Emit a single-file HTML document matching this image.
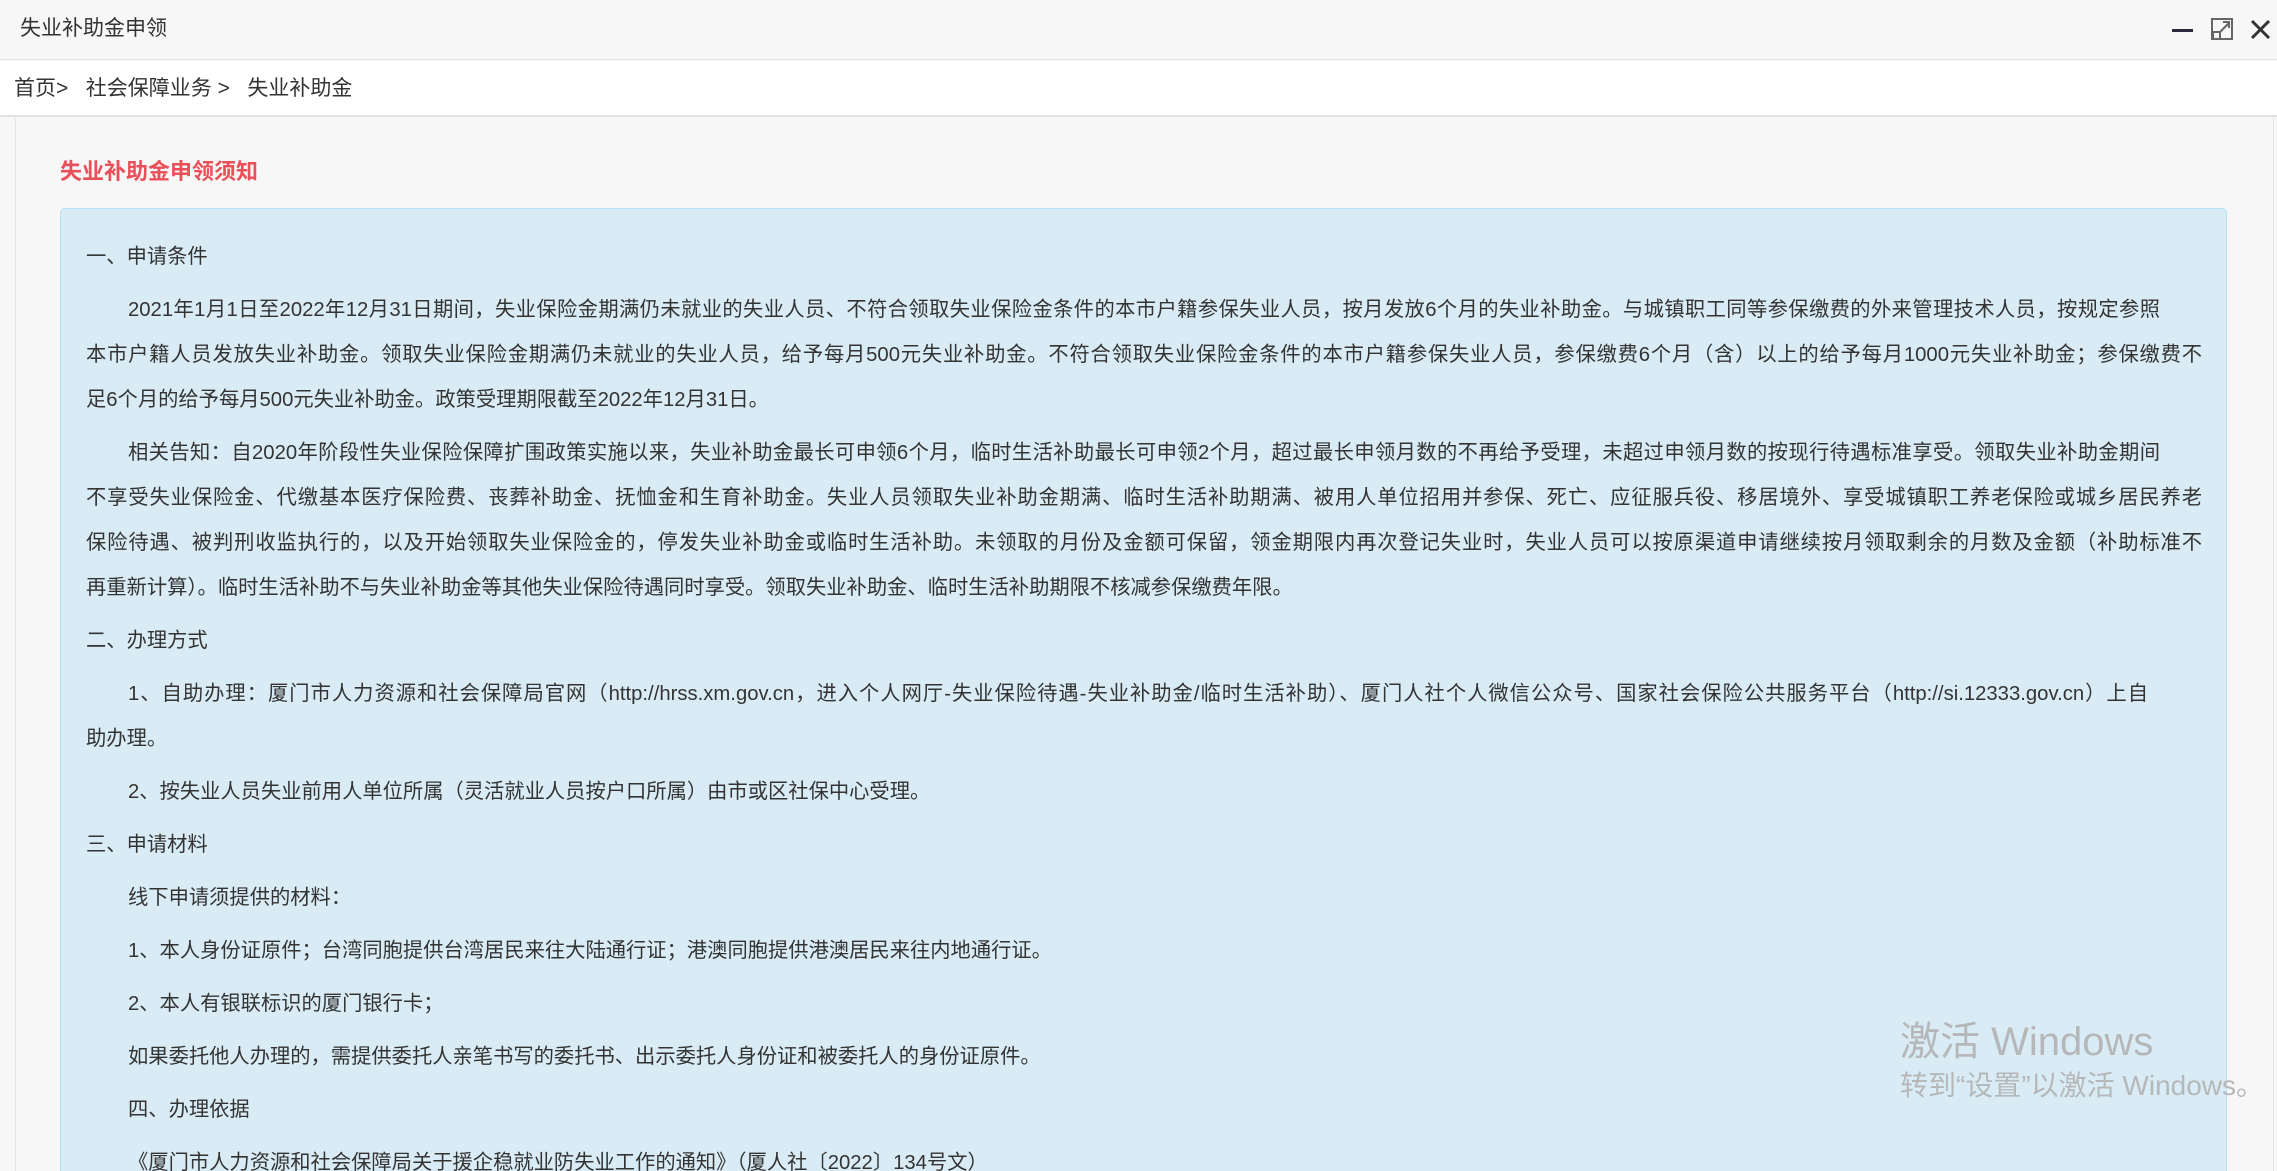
<!DOCTYPE html>
<html><head><meta charset="utf-8"><style>
*{margin:0;padding:0;box-sizing:border-box}
html,body{width:2277px;height:1171px;overflow:hidden}
body{background:#f7f7f7;font-family:"Liberation Sans","Noto Sans CJK SC",sans-serif;color:#333;position:relative}
.tb{position:absolute;left:0;top:0;width:2277px;height:60px;background:#f7f7f7;border-bottom:1px solid #e6e6e6}
.tb .t{position:absolute;left:20px;top:14px;font-size:21px;line-height:30px;color:#333}
.bc{position:absolute;left:0;top:61px;width:2277px;height:56px;background:#fff;border-bottom:2px solid #e2e2e2;font-size:21px;line-height:56px;padding-left:14px;color:#333}
.ct{position:absolute;left:15px;top:118px;width:2259px;height:1053px;border-left:1px solid #e4e4e4;border-right:1px solid #e4e4e4;background:#f7f7f7}
.h{position:absolute;left:60px;top:157px;font-size:22px;font-weight:bold;color:#e9505a;line-height:30px}
.box{position:absolute;left:60px;top:208px;width:2167px;height:1000px;background:#d9ecf5;border:1px solid #b4e2f2;border-radius:5px;padding:26px 0 0 25px}
.box div{font-size:20.3px;line-height:45px;white-space:nowrap}
.box .f{width:2074px;text-align:justify;text-align-last:justify}
.i{padding-left:42px}
.g{margin-top:8px}
.wm{position:absolute;left:1900px;top:1016px;color:#b5b7b9;font-family:"Liberation Sans","Noto Sans CJK SC",sans-serif;white-space:nowrap}
</style></head><body>
<div class="tb"><span class="t">失业补助金申领</span>
<svg style="position:absolute;left:2170px;top:18px" width="104" height="24" viewBox="0 0 104 24">
<rect x="2" y="11" width="21" height="3" fill="#2a2a3a"/>
<rect x="42" y="1" width="20" height="20" fill="none" stroke="#666" stroke-width="2"/>
<rect x="43" y="14" width="7" height="7" fill="#f7f7f7" stroke="#666" stroke-width="2"/>
<path d="M50 14 L59 5 M53 4 H59 V10" fill="none" stroke="#666" stroke-width="2"/>
<path d="M82 3 L99 20 M99 3 L82 20" stroke="#333" stroke-width="3"/>
</svg></div>
<div class="bc">首页&gt;&nbsp;&nbsp; 社会保障业务 &gt;&nbsp;&nbsp; 失业补助金</div>
<div class="ct"></div>
<div class="h">失业补助金申领须知</div>
<div class="box">
<div>一、申请条件</div>
<div class="g i f">2021年1月1日至2022年12月31日期间，失业保险金期满仍未就业的失业人员、不符合领取失业保险金条件的本市户籍参保失业人员，按月发放6个月的失业补助金。与城镇职工同等参保缴费的外来管理技术人员，按规定参照</div>
<div class="f" style="width:2116px">本市户籍人员发放失业补助金。领取失业保险金期满仍未就业的失业人员，给予每月500元失业补助金。不符合领取失业保险金条件的本市户籍参保失业人员，参保缴费6个月（含）以上的给予每月1000元失业补助金；参保缴费不</div>
<div>足6个月的给予每月500元失业补助金。政策受理期限截至2022年12月31日。</div>
<div class="g i f">相关告知：自2020年阶段性失业保险保障扩围政策实施以来，失业补助金最长可申领6个月，临时生活补助最长可申领2个月，超过最长申领月数的不再给予受理，未超过申领月数的按现行待遇标准享受。领取失业补助金期间</div>
<div class="f" style="width:2116px">不享受失业保险金、代缴基本医疗保险费、丧葬补助金、抚恤金和生育补助金。失业人员领取失业补助金期满、临时生活补助期满、被用人单位招用并参保、死亡、应征服兵役、移居境外、享受城镇职工养老保险或城乡居民养老</div>
<div class="f" style="width:2116px">保险待遇、被判刑收监执行的，以及开始领取失业保险金的，停发失业补助金或临时生活补助。未领取的月份及金额可保留，领金期限内再次登记失业时，失业人员可以按原渠道申请继续按月领取剩余的月数及金额（补助标准不</div>
<div>再重新计算）。临时生活补助不与失业补助金等其他失业保险待遇同时享受。领取失业补助金、临时生活补助期限不核减参保缴费年限。</div>
<div class="g">二、办理方式</div>
<div class="g i f" style="width:2062px">1、自助办理：厦门市人力资源和社会保障局官网（http://hrss.xm.gov.cn，进入个人网厅-失业保险待遇-失业补助金/临时生活补助）、厦门人社个人微信公众号、国家社会保险公共服务平台（http://si.12333.gov.cn）上自</div>
<div>助办理。</div>
<div class="g i">2、按失业人员失业前用人单位所属（灵活就业人员按户口所属）由市或区社保中心受理。</div>
<div class="g">三、申请材料</div>
<div class="g i">线下申请须提供的材料：</div>
<div class="g i">1、本人身份证原件；台湾同胞提供台湾居民来往大陆通行证；港澳同胞提供港澳居民来往内地通行证。</div>
<div class="g i">2、本人有银联标识的厦门银行卡；</div>
<div class="g i">如果委托他人办理的，需提供委托人亲笔书写的委托书、出示委托人身份证和被委托人的身份证原件。</div>
<div class="g i">四、办理依据</div>
<div class="g i">《厦门市人力资源和社会保障局关于援企稳就业防失业工作的通知》（厦人社〔2022〕134号文）</div>
</div>
<div class="wm"><div style="font-size:40px;line-height:52px">激活 Windows</div><div style="font-size:28px;line-height:36px">转到“设置”以激活 Windows。</div></div>
</body></html>
